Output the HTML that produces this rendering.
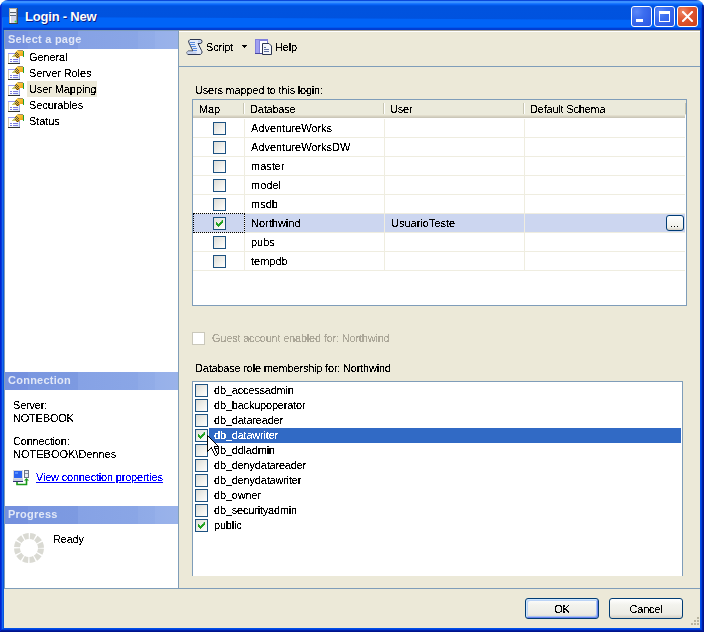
<!DOCTYPE html><html><head><meta charset="utf-8"><style>
*{margin:0;padding:0;box-sizing:border-box}
html,body{width:704px;height:632px;overflow:hidden;background:#fff}
body{position:relative;font-family:"Liberation Sans",sans-serif;font-size:11px;color:#000;line-height:13px}
.a{position:absolute}
.t{position:absolute;white-space:nowrap;letter-spacing:-0.2px;transform:scaleY(1.06);transform-origin:0 10.3px;filter:url(#crisp)}
#win{left:0;top:0;width:704px;height:632px;border-radius:8px 8px 0 0;overflow:hidden;background:#ECE9D8}
#title{left:0;top:0;width:704px;height:30px;background:linear-gradient(180deg,#0A48DC 0,#0A48DC 1px,#3A90FF 1px,#3A90FF 3px,#1A78FF 3px,#1A78FF 4px,#0A66F8 4px,#0A66F8 5px,#0058E8 5px,#0058E8 6px,#0053DF 6px,#0052DE 27px,#0058EE 27px,#0058EE 28px,#0040D8 28px,#003CD0 30px)}
#tband{left:0;top:16px;width:704px;height:11px;background:#0064F8;clip-path:polygon(0 1px,704px 4px,704px 11px,0 11px)}
.fl{top:0;height:632px;width:1px}
.fb{left:0;width:704px;height:1px}
.ttl{transform:none;filter:none;left:25px;top:7px;font-weight:bold;font-size:13px;color:#fff;text-shadow:1px 1px 0 #0A1883;line-height:20px;letter-spacing:-0.2px}
.cb{top:6px;width:21px;height:21px;border:1px solid #fff;border-radius:3px}
.hdr{position:absolute;left:5px;width:173px;height:18px;background:linear-gradient(90deg,#7490DE 0,#7692DF 23px,#7A97E0 23px,#7D9AE1 73px,#86A2E5 73px,#8AA6E6 133px,#8FAAE7 133px,#91ACE8 150px,#96B0EA 150px,#9AB3EA 173px);}
.ht{left:8px;color:#E2E8F7;font-weight:bold;letter-spacing:0.25px;filter:none}
.chk{position:absolute;width:13px;height:13px;border:1px solid #1C5180;background:linear-gradient(135deg,#DCDCD7 0,#F0F0EC 55%,#FFFFFF 100%)}
.chk svg{position:absolute;left:2px;top:2px}
.gl{position:absolute;background:#EFEDE0}
.btn{position:absolute;width:74px;height:21px;border:1px solid #003C74;border-radius:3px;background:linear-gradient(#FFFFFF,#F3F3EE 30%,#ECEBE4 80%,#D6D0C5)}
</style></head><body><svg width="0" height="0" style="position:absolute"><filter id="crisp" x="-5%" y="-20%" width="110%" height="140%"><feComponentTransfer><feFuncA type="discrete" tableValues="0 0 0 0 0 0 0 0 0 0 0 0 0 0 0 0 0 0 0 0 0 1 1 1 1 1 1 1 1 1 1 1 1 1 1 1 1 1 1 1 1 1 1 1 1 1 1 1 1 1"/></feComponentTransfer></filter></svg><div id="win" class="a">
<div id="title" class="a"></div><div id="tband" class="a"></div>
<div class="a fl" style="left:0px;top:5px;height:627px;background:#0024D0"></div>
<div class="a fl" style="left:1px;top:4px;height:628px;background:#0838DC"></div>
<div class="a fl" style="left:2px;top:18px;height:614px;background:#166AEE"></div>
<div class="a fl" style="left:3px;top:30px;height:602px;background:#0855DD"></div>
<div class="a fl" style="left:700px;top:30px;height:602px;background:#0050E8"></div>
<div class="a fl" style="left:701px;top:8px;height:624px;background:#003BDA"></div>
<div class="a fl" style="left:702px;top:5px;height:627px;background:#001EA0"></div>
<div class="a fl" style="left:703px;top:5px;height:627px;background:#00138C"></div>
<div class="a fb" style="top:628px;left:3px;width:698px;background:#0050E8"></div>
<div class="a fb" style="top:629px;left:2px;width:700px;background:#003BDA"></div>
<div class="a fb" style="top:630px;left:1px;width:702px;background:#001EA0"></div>
<div class="a fb" style="top:631px;left:0px;width:704px;background:#00138C"></div>
<svg class="a" style="left:9px;top:8px" width="9" height="16" viewBox="0 0 9 16" shape-rendering="crispEdges">
<rect x="0" y="0" width="9" height="16" fill="#B4AC98"/>
<rect x="8" y="0" width="1" height="16" fill="#4A4A52"/>
<rect x="0" y="15" width="9" height="1" fill="#3E3E46"/>
<rect x="1" y="1" width="7" height="3" fill="#F2F5FA"/>
<rect x="1" y="4" width="7" height="1" fill="#58606E"/>
<rect x="1" y="5" width="7" height="1" fill="#E6EAF2"/>
<rect x="1" y="6" width="7" height="1" fill="#EEF0F6"/>
<rect x="1" y="7" width="7" height="1" fill="#5A6878"/>
<rect x="1" y="8" width="7" height="7" fill="#D2D6EC"/>
<rect x="1" y="8" width="1" height="7" fill="#FFFFFF"/>
<rect x="7" y="1" width="1" height="14" fill="#8C92A0"/>
<circle cx="6.5" cy="13.5" r="1" fill="#38E038" shape-rendering="auto"/>
</svg>
<div class="t ttl">Login - New</div>
<div class="a cb" style="left:631px;background:radial-gradient(circle at 25% 25%,#5C88F8 0,#3C6EF0 35%,#2855E2 100%)"><div class="a" style="left:4px;top:12px;width:7px;height:3px;background:#fff"></div></div>
<div class="a cb" style="left:654px;background:radial-gradient(circle at 25% 25%,#5C88F8 0,#3C6EF0 35%,#2855E2 100%)"><div class="a" style="left:4px;top:4px;width:11px;height:11px;border:1px solid #fff;border-top-width:3px"></div></div>
<div class="a cb" style="left:677px;background:radial-gradient(circle at 25% 25%,#EE8A68 0,#E25A34 35%,#CC4018 100%)"><svg class="a" style="left:4px;top:4px" width="11" height="11" viewBox="0 0 11 11"><path d="M1 1L10 10M10 1L1 10" stroke="#fff" stroke-width="2" stroke-linecap="square"/></svg></div>
<div class="a" style="left:4px;top:30px;width:175px;height:559px;background:#fff;border:1px solid #7F9DB9"></div>
<div class="hdr" style="top:31px"></div><div class="t ht" style="top:33px">Select a page</div>
<div class="a" style="left:27px;top:81px;width:70px;height:16px;background:#ECE9D8"></div>
<div class="a" style="left:8px;top:49px"><svg width="17" height="16" viewBox="0 0 17 16" shape-rendering="crispEdges">
<defs><linearGradient id="hg" x1="0" y1="0" x2="1" y2="1"><stop offset="0" stop-color="#FFE890"/><stop offset="0.5" stop-color="#F8C030"/><stop offset="1" stop-color="#E89010"/></linearGradient>
<linearGradient id="pg" x1="0" y1="0" x2="1" y2="1"><stop offset="0.5" stop-color="#FFFFFF"/><stop offset="1" stop-color="#C8DCF8"/></linearGradient></defs>
<rect x="0" y="4" width="12" height="11" fill="url(#pg)"/>
<rect x="0" y="4" width="1" height="11" fill="#D0C8B0"/>
<rect x="0" y="4" width="12" height="1" fill="#9898F0"/>
<rect x="11" y="5" width="1" height="10" fill="#A0A8E8"/>
<rect x="0" y="14" width="12" height="1" fill="#303030"/>
<rect x="2" y="10" width="2" height="1" fill="#7C7CE0"/><rect x="5" y="10" width="5" height="1" fill="#7C7CE0"/>
<rect x="2" y="12" width="2" height="1" fill="#7C7CE0"/><rect x="5" y="12" width="5" height="1" fill="#7C7CE0"/>
<path d="M4 8 L5 6 L7 4 L8 2 L9 1 L15 1 L15 7 L12 7 L11 8 L10 9 L9 9 L7 8 Z" fill="url(#hg)"/>
<path d="M4 8 L5 6 L7 4 L7 8 Z" fill="#C8C870"/>
<rect x="8" y="3" width="1" height="1" fill="#505040"/><rect x="7" y="4" width="1" height="1" fill="#505040"/><rect x="9" y="4" width="1" height="1" fill="#505040"/>
<rect x="8" y="5" width="1" height="1" fill="#505040"/><rect x="10" y="5" width="1" height="1" fill="#505040"/><rect x="7" y="6" width="1" height="1" fill="#505040"/>
<rect x="9" y="6" width="1" height="1" fill="#505040"/><rect x="8" y="7" width="1" height="1" fill="#505040"/><rect x="10" y="7" width="1" height="1" fill="#505040"/>
<rect x="9" y="8" width="1" height="1" fill="#303020"/>
<rect x="10" y="1" width="5" height="1" fill="#A09070"/>
<rect x="15" y="2" width="1" height="6" fill="#20A030"/>
</svg></div>
<div class="t" style="left:29px;top:51px;letter-spacing:-0.1px">General</div>
<div class="a" style="left:8px;top:65px"><svg width="17" height="16" viewBox="0 0 17 16" shape-rendering="crispEdges">
<defs><linearGradient id="hg" x1="0" y1="0" x2="1" y2="1"><stop offset="0" stop-color="#FFE890"/><stop offset="0.5" stop-color="#F8C030"/><stop offset="1" stop-color="#E89010"/></linearGradient>
<linearGradient id="pg" x1="0" y1="0" x2="1" y2="1"><stop offset="0.5" stop-color="#FFFFFF"/><stop offset="1" stop-color="#C8DCF8"/></linearGradient></defs>
<rect x="0" y="4" width="12" height="11" fill="url(#pg)"/>
<rect x="0" y="4" width="1" height="11" fill="#D0C8B0"/>
<rect x="0" y="4" width="12" height="1" fill="#9898F0"/>
<rect x="11" y="5" width="1" height="10" fill="#A0A8E8"/>
<rect x="0" y="14" width="12" height="1" fill="#303030"/>
<rect x="2" y="10" width="2" height="1" fill="#7C7CE0"/><rect x="5" y="10" width="5" height="1" fill="#7C7CE0"/>
<rect x="2" y="12" width="2" height="1" fill="#7C7CE0"/><rect x="5" y="12" width="5" height="1" fill="#7C7CE0"/>
<path d="M4 8 L5 6 L7 4 L8 2 L9 1 L15 1 L15 7 L12 7 L11 8 L10 9 L9 9 L7 8 Z" fill="url(#hg)"/>
<path d="M4 8 L5 6 L7 4 L7 8 Z" fill="#C8C870"/>
<rect x="8" y="3" width="1" height="1" fill="#505040"/><rect x="7" y="4" width="1" height="1" fill="#505040"/><rect x="9" y="4" width="1" height="1" fill="#505040"/>
<rect x="8" y="5" width="1" height="1" fill="#505040"/><rect x="10" y="5" width="1" height="1" fill="#505040"/><rect x="7" y="6" width="1" height="1" fill="#505040"/>
<rect x="9" y="6" width="1" height="1" fill="#505040"/><rect x="8" y="7" width="1" height="1" fill="#505040"/><rect x="10" y="7" width="1" height="1" fill="#505040"/>
<rect x="9" y="8" width="1" height="1" fill="#303020"/>
<rect x="10" y="1" width="5" height="1" fill="#A09070"/>
<rect x="15" y="2" width="1" height="6" fill="#20A030"/>
</svg></div>
<div class="t" style="left:29px;top:67px;letter-spacing:-0.1px">Server Roles</div>
<div class="a" style="left:8px;top:81px"><svg width="17" height="16" viewBox="0 0 17 16" shape-rendering="crispEdges">
<defs><linearGradient id="hg" x1="0" y1="0" x2="1" y2="1"><stop offset="0" stop-color="#FFE890"/><stop offset="0.5" stop-color="#F8C030"/><stop offset="1" stop-color="#E89010"/></linearGradient>
<linearGradient id="pg" x1="0" y1="0" x2="1" y2="1"><stop offset="0.5" stop-color="#FFFFFF"/><stop offset="1" stop-color="#C8DCF8"/></linearGradient></defs>
<rect x="0" y="4" width="12" height="11" fill="url(#pg)"/>
<rect x="0" y="4" width="1" height="11" fill="#D0C8B0"/>
<rect x="0" y="4" width="12" height="1" fill="#9898F0"/>
<rect x="11" y="5" width="1" height="10" fill="#A0A8E8"/>
<rect x="0" y="14" width="12" height="1" fill="#303030"/>
<rect x="2" y="10" width="2" height="1" fill="#7C7CE0"/><rect x="5" y="10" width="5" height="1" fill="#7C7CE0"/>
<rect x="2" y="12" width="2" height="1" fill="#7C7CE0"/><rect x="5" y="12" width="5" height="1" fill="#7C7CE0"/>
<path d="M4 8 L5 6 L7 4 L8 2 L9 1 L15 1 L15 7 L12 7 L11 8 L10 9 L9 9 L7 8 Z" fill="url(#hg)"/>
<path d="M4 8 L5 6 L7 4 L7 8 Z" fill="#C8C870"/>
<rect x="8" y="3" width="1" height="1" fill="#505040"/><rect x="7" y="4" width="1" height="1" fill="#505040"/><rect x="9" y="4" width="1" height="1" fill="#505040"/>
<rect x="8" y="5" width="1" height="1" fill="#505040"/><rect x="10" y="5" width="1" height="1" fill="#505040"/><rect x="7" y="6" width="1" height="1" fill="#505040"/>
<rect x="9" y="6" width="1" height="1" fill="#505040"/><rect x="8" y="7" width="1" height="1" fill="#505040"/><rect x="10" y="7" width="1" height="1" fill="#505040"/>
<rect x="9" y="8" width="1" height="1" fill="#303020"/>
<rect x="10" y="1" width="5" height="1" fill="#A09070"/>
<rect x="15" y="2" width="1" height="6" fill="#20A030"/>
</svg></div>
<div class="t" style="left:29px;top:83px;letter-spacing:-0.1px">User Mapping</div>
<div class="a" style="left:8px;top:97px"><svg width="17" height="16" viewBox="0 0 17 16" shape-rendering="crispEdges">
<defs><linearGradient id="hg" x1="0" y1="0" x2="1" y2="1"><stop offset="0" stop-color="#FFE890"/><stop offset="0.5" stop-color="#F8C030"/><stop offset="1" stop-color="#E89010"/></linearGradient>
<linearGradient id="pg" x1="0" y1="0" x2="1" y2="1"><stop offset="0.5" stop-color="#FFFFFF"/><stop offset="1" stop-color="#C8DCF8"/></linearGradient></defs>
<rect x="0" y="4" width="12" height="11" fill="url(#pg)"/>
<rect x="0" y="4" width="1" height="11" fill="#D0C8B0"/>
<rect x="0" y="4" width="12" height="1" fill="#9898F0"/>
<rect x="11" y="5" width="1" height="10" fill="#A0A8E8"/>
<rect x="0" y="14" width="12" height="1" fill="#303030"/>
<rect x="2" y="10" width="2" height="1" fill="#7C7CE0"/><rect x="5" y="10" width="5" height="1" fill="#7C7CE0"/>
<rect x="2" y="12" width="2" height="1" fill="#7C7CE0"/><rect x="5" y="12" width="5" height="1" fill="#7C7CE0"/>
<path d="M4 8 L5 6 L7 4 L8 2 L9 1 L15 1 L15 7 L12 7 L11 8 L10 9 L9 9 L7 8 Z" fill="url(#hg)"/>
<path d="M4 8 L5 6 L7 4 L7 8 Z" fill="#C8C870"/>
<rect x="8" y="3" width="1" height="1" fill="#505040"/><rect x="7" y="4" width="1" height="1" fill="#505040"/><rect x="9" y="4" width="1" height="1" fill="#505040"/>
<rect x="8" y="5" width="1" height="1" fill="#505040"/><rect x="10" y="5" width="1" height="1" fill="#505040"/><rect x="7" y="6" width="1" height="1" fill="#505040"/>
<rect x="9" y="6" width="1" height="1" fill="#505040"/><rect x="8" y="7" width="1" height="1" fill="#505040"/><rect x="10" y="7" width="1" height="1" fill="#505040"/>
<rect x="9" y="8" width="1" height="1" fill="#303020"/>
<rect x="10" y="1" width="5" height="1" fill="#A09070"/>
<rect x="15" y="2" width="1" height="6" fill="#20A030"/>
</svg></div>
<div class="t" style="left:29px;top:99px;letter-spacing:-0.1px">Securables</div>
<div class="a" style="left:8px;top:113px"><svg width="17" height="16" viewBox="0 0 17 16" shape-rendering="crispEdges">
<defs><linearGradient id="hg" x1="0" y1="0" x2="1" y2="1"><stop offset="0" stop-color="#FFE890"/><stop offset="0.5" stop-color="#F8C030"/><stop offset="1" stop-color="#E89010"/></linearGradient>
<linearGradient id="pg" x1="0" y1="0" x2="1" y2="1"><stop offset="0.5" stop-color="#FFFFFF"/><stop offset="1" stop-color="#C8DCF8"/></linearGradient></defs>
<rect x="0" y="4" width="12" height="11" fill="url(#pg)"/>
<rect x="0" y="4" width="1" height="11" fill="#D0C8B0"/>
<rect x="0" y="4" width="12" height="1" fill="#9898F0"/>
<rect x="11" y="5" width="1" height="10" fill="#A0A8E8"/>
<rect x="0" y="14" width="12" height="1" fill="#303030"/>
<rect x="2" y="10" width="2" height="1" fill="#7C7CE0"/><rect x="5" y="10" width="5" height="1" fill="#7C7CE0"/>
<rect x="2" y="12" width="2" height="1" fill="#7C7CE0"/><rect x="5" y="12" width="5" height="1" fill="#7C7CE0"/>
<path d="M4 8 L5 6 L7 4 L8 2 L9 1 L15 1 L15 7 L12 7 L11 8 L10 9 L9 9 L7 8 Z" fill="url(#hg)"/>
<path d="M4 8 L5 6 L7 4 L7 8 Z" fill="#C8C870"/>
<rect x="8" y="3" width="1" height="1" fill="#505040"/><rect x="7" y="4" width="1" height="1" fill="#505040"/><rect x="9" y="4" width="1" height="1" fill="#505040"/>
<rect x="8" y="5" width="1" height="1" fill="#505040"/><rect x="10" y="5" width="1" height="1" fill="#505040"/><rect x="7" y="6" width="1" height="1" fill="#505040"/>
<rect x="9" y="6" width="1" height="1" fill="#505040"/><rect x="8" y="7" width="1" height="1" fill="#505040"/><rect x="10" y="7" width="1" height="1" fill="#505040"/>
<rect x="9" y="8" width="1" height="1" fill="#303020"/>
<rect x="10" y="1" width="5" height="1" fill="#A09070"/>
<rect x="15" y="2" width="1" height="6" fill="#20A030"/>
</svg></div>
<div class="t" style="left:29px;top:115px;letter-spacing:-0.1px">Status</div>
<div class="hdr" style="top:372px"></div><div class="t ht" style="top:374px">Connection</div>
<div class="t" style="left:13px;top:399px">Server:</div>
<div class="t" style="left:13px;top:412px">NOTEBOOK</div>
<div class="t" style="left:13px;top:435px">Connection:</div>
<div class="t" style="left:13px;top:448px;letter-spacing:0">NOTEBOOK\Dennes</div>
<svg class="a" style="left:13px;top:470px" width="17" height="16" viewBox="0 0 17 16">
<rect x="0" y="0" width="10" height="9" fill="#D8D8E0"/>
<rect x="1" y="1" width="8" height="7" fill="#2A62F0"/><rect x="2" y="2" width="3" height="2" fill="#5A90FF"/>
<rect x="0" y="9" width="10" height="3" fill="#C8CCE0"/>
<rect x="0" y="11" width="10" height="1" fill="#303070"/>
<rect x="11.5" y="0.5" width="4" height="7" fill="#E8ECF4" stroke="#6C7488" stroke-width="1"/>
<rect x="12" y="3" width="3" height="1" fill="#8890A0"/>
<path d="M4 12 V14.5 H13.5 V9" fill="none" stroke="#1A9A1A" stroke-width="1.6"/>
<path d="M11 10.5 L13.5 8 L16 10.5 Z" fill="#1A9A1A"/>
</svg>
<div class="t" style="left:36px;top:471px;color:#0000FF;text-decoration:underline">View connection properties</div>
<div class="hdr" style="top:506px"></div><div class="t ht" style="top:508px">Progress</div>
<svg class="a" style="left:13px;top:532px" width="32" height="32" viewBox="-16 -16 32 32"><circle cx="0" cy="0" r="12" fill="none" stroke="#DADAD3" stroke-width="6" stroke-dasharray="5 1.283" stroke-dashoffset="5.64"/></svg>
<div class="t" style="left:53px;top:533px">Ready</div>
<div class="a" style="left:179px;top:30px;width:521px;height:1px;background:#ACA899"></div>
<div class="a" style="left:179px;top:31px;width:521px;height:1px;background:#fff"></div>
<div class="a" style="left:179px;top:66px;width:521px;height:1px;background:#7F9DB9"></div>
<div class="a" style="left:178px;top:588px;width:522px;height:1px;background:#7F9DB9"></div>
<svg class="a" style="left:184px;top:36px" width="22" height="22" viewBox="0 0 22 22">
<path d="M6 3.5 H16 A2 2 0 0 1 16 7.5 H14 L17.5 14.5 A2.5 2.5 0 0 1 15 18.5 H4 A2 2 0 0 1 4 15 H9 L5 7 A2.5 2.5 0 0 1 6 3.5 Z" fill="#E6ECF8" stroke="#2B3550" stroke-width="1"/>
<path d="M3 15.5 H12.5 V18 H3.5 Z" fill="#C8D4F0"/>
<path d="M14 4.5 H16.5 V6.5 H14 Z" fill="#B8C8F0"/>
<rect x="6" y="6" width="5" height="1" fill="#5B8CE0"/>
<rect x="6" y="8" width="5" height="1" fill="#5B8CE0"/>
<rect x="7" y="10" width="5" height="1" fill="#5B8CE0"/>
<rect x="9" y="12" width="4" height="1" fill="#5B8CE0"/>
<rect x="9" y="14" width="4" height="1" fill="#5B8CE0"/>
</svg>
<div class="t" style="left:206px;top:41px">Script</div>
<svg class="a" style="left:242px;top:45px" width="6" height="3" viewBox="0 0 6 3"><path d="M0 0H5V1H4V2H3V3H2V2H1V1H0Z" fill="#000"/></svg>
<svg class="a" style="left:252px;top:36px" width="22" height="22" viewBox="0 0 22 22">
<rect x="3" y="3" width="13" height="15" fill="#8080DC"/>
<rect x="4" y="4" width="3" height="13" fill="#A0A0F0"/>
<rect x="3" y="17" width="13" height="1" fill="#4848A0"/>
<rect x="8" y="5" width="7" height="12" fill="#FFFFFF"/>
<path d="M10.5 7.5 H17 L19.5 10 V18.5 H10.5 Z" fill="#F4F6FA" stroke="#2A3550" stroke-width="1"/>
<rect x="12" y="11" width="2" height="1" fill="#6070A0"/>
<rect x="12" y="13" width="5" height="1" fill="#6070A0"/>
<rect x="12" y="15" width="5" height="1" fill="#6070A0"/>
</svg>
<div class="t" style="left:275px;top:41px">Help</div>
<div class="t" style="left:195px;top:84px">Users mapped to this login:</div>
<div class="a" style="left:192px;top:99px;width:495px;height:207px;background:#fff;border:1px solid #7F9DB9"></div>
<div class="a" style="left:193px;top:100px;width:493px;height:15px;background:#EBEADB"></div>
<div class="a" style="left:193px;top:115px;width:492px;height:1px;background:#E2DECD"></div><div class="a" style="left:193px;top:116px;width:492px;height:1px;background:#D6D2C2"></div><div class="a" style="left:193px;top:117px;width:492px;height:1px;background:#CBC7B8"></div>
<div class="a" style="left:685px;top:103px;width:1px;height:11px;background:#C7C5B2"></div>
<div class="a" style="left:243px;top:103px;width:1px;height:11px;background:#C7C5B2"></div>
<div class="a" style="left:244px;top:103px;width:1px;height:11px;background:#fff"></div>
<div class="a" style="left:383px;top:103px;width:1px;height:11px;background:#C7C5B2"></div>
<div class="a" style="left:384px;top:103px;width:1px;height:11px;background:#fff"></div>
<div class="a" style="left:523px;top:103px;width:1px;height:11px;background:#C7C5B2"></div>
<div class="a" style="left:524px;top:103px;width:1px;height:11px;background:#fff"></div>
<div class="t" style="left:199px;top:103px">Map</div>
<div class="t" style="left:250px;top:103px">Database</div>
<div class="t" style="left:390px;top:103px">User</div>
<div class="t" style="left:530px;top:103px">Default Schema</div>
<div class="gl" style="left:193px;top:137px;width:492px;height:1px"></div>
<div class="gl" style="left:244px;top:119px;width:1px;height:18px"></div>
<div class="gl" style="left:384px;top:119px;width:1px;height:18px"></div>
<div class="gl" style="left:524px;top:119px;width:1px;height:18px"></div>
<div class="chk" style="left:213px;top:122px"></div>
<div class="t" style="left:251px;top:122px;letter-spacing:0">AdventureWorks</div>
<div class="gl" style="left:193px;top:156px;width:492px;height:1px"></div>
<div class="gl" style="left:244px;top:138px;width:1px;height:18px"></div>
<div class="gl" style="left:384px;top:138px;width:1px;height:18px"></div>
<div class="gl" style="left:524px;top:138px;width:1px;height:18px"></div>
<div class="chk" style="left:213px;top:141px"></div>
<div class="t" style="left:251px;top:141px;letter-spacing:0">AdventureWorksDW</div>
<div class="gl" style="left:193px;top:175px;width:492px;height:1px"></div>
<div class="gl" style="left:244px;top:157px;width:1px;height:18px"></div>
<div class="gl" style="left:384px;top:157px;width:1px;height:18px"></div>
<div class="gl" style="left:524px;top:157px;width:1px;height:18px"></div>
<div class="chk" style="left:213px;top:160px"></div>
<div class="t" style="left:251px;top:160px;letter-spacing:0">master</div>
<div class="gl" style="left:193px;top:194px;width:492px;height:1px"></div>
<div class="gl" style="left:244px;top:176px;width:1px;height:18px"></div>
<div class="gl" style="left:384px;top:176px;width:1px;height:18px"></div>
<div class="gl" style="left:524px;top:176px;width:1px;height:18px"></div>
<div class="chk" style="left:213px;top:179px"></div>
<div class="t" style="left:251px;top:179px;letter-spacing:0">model</div>
<div class="gl" style="left:193px;top:213px;width:492px;height:1px"></div>
<div class="gl" style="left:244px;top:195px;width:1px;height:18px"></div>
<div class="gl" style="left:384px;top:195px;width:1px;height:18px"></div>
<div class="gl" style="left:524px;top:195px;width:1px;height:18px"></div>
<div class="chk" style="left:213px;top:198px"></div>
<div class="t" style="left:251px;top:198px;letter-spacing:0">msdb</div>
<div class="a" style="left:193px;top:209px;width:493px;height:0px"></div>
<div class="a" style="left:193px;top:214px;width:492px;height:18px;background:#CCD6F0"></div>
<div class="gl" style="left:193px;top:232px;width:492px;height:1px"></div>
<div class="gl" style="left:244px;top:214px;width:1px;height:18px"></div>
<div class="gl" style="left:384px;top:214px;width:1px;height:18px"></div>
<div class="gl" style="left:524px;top:214px;width:1px;height:18px"></div>
<div class="chk" style="left:213px;top:217px"><svg width="7" height="7" viewBox="0 0 7 7"><path d="M6 0h1v3h-1v1h-1v1h-1v1h-1v1h-1v-1h-1v-1h-1v-3h1v1h1v1h1v-1h1v-1h1z" fill="#21A121"/></svg></div>
<div class="t" style="left:251px;top:217px;letter-spacing:0">Northwind</div>
<div class="gl" style="left:193px;top:251px;width:492px;height:1px"></div>
<div class="gl" style="left:244px;top:233px;width:1px;height:18px"></div>
<div class="gl" style="left:384px;top:233px;width:1px;height:18px"></div>
<div class="gl" style="left:524px;top:233px;width:1px;height:18px"></div>
<div class="chk" style="left:213px;top:236px"></div>
<div class="t" style="left:251px;top:236px;letter-spacing:0">pubs</div>
<div class="gl" style="left:193px;top:270px;width:492px;height:1px"></div>
<div class="gl" style="left:244px;top:252px;width:1px;height:18px"></div>
<div class="gl" style="left:384px;top:252px;width:1px;height:18px"></div>
<div class="gl" style="left:524px;top:252px;width:1px;height:18px"></div>
<div class="chk" style="left:213px;top:255px"></div>
<div class="t" style="left:251px;top:255px;letter-spacing:0">tempdb</div>
<div class="a" style="left:193px;top:213px;width:52px;height:20px;border:1px dotted #000"></div>
<div class="t" style="left:391px;top:217px;letter-spacing:0">UsuarioTeste</div>
<div class="btn" style="left:666px;top:215px;width:18px;height:16px;border-radius:3px;background:linear-gradient(#FFFFFF,#F0F0EA 80%,#D6D0C5)"></div>
<div class="a" style="left:671px;top:226px;width:1px;height:1px;background:#000;box-shadow:3px 0 0 #000,6px 0 0 #000"></div>
<div class="a" style="left:192px;top:332px;width:13px;height:13px;border:1px solid #CAC8BB;background:#fff"></div>
<div class="t" style="left:212px;top:332px;color:#ACA899">Guest account enabled for: Northwind</div>
<div class="t" style="left:195px;top:362px">Database role membership for: Northwind</div>
<div class="a" style="left:192px;top:381px;width:491px;height:195px;background:#fff;border:1px solid #7F9DB9;border-bottom:0"></div>
<div class="chk" style="left:195px;top:384px"></div>
<div class="t" style="left:214px;top:384px;color:#000">db_accessadmin</div>
<div class="chk" style="left:195px;top:399px"></div>
<div class="t" style="left:214px;top:399px;color:#000">db_backupoperator</div>
<div class="chk" style="left:195px;top:414px"></div>
<div class="t" style="left:214px;top:414px;color:#000">db_datareader</div>
<div class="a" style="left:209px;top:428px;width:472px;height:15px;background:#316AC5"></div>
<div class="chk" style="left:195px;top:429px"><svg width="7" height="7" viewBox="0 0 7 7"><path d="M6 0h1v3h-1v1h-1v1h-1v1h-1v1h-1v-1h-1v-1h-1v-3h1v1h1v1h1v-1h1v-1h1z" fill="#21A121"/></svg></div>
<div class="t" style="left:214px;top:429px;color:#fff">db_datawriter</div>
<div class="chk" style="left:195px;top:444px"></div>
<div class="t" style="left:214px;top:444px;color:#000">db_ddladmin</div>
<div class="chk" style="left:195px;top:459px"></div>
<div class="t" style="left:214px;top:459px;color:#000">db_denydatareader</div>
<div class="chk" style="left:195px;top:474px"></div>
<div class="t" style="left:214px;top:474px;color:#000">db_denydatawriter</div>
<div class="chk" style="left:195px;top:489px"></div>
<div class="t" style="left:214px;top:489px;color:#000">db_owner</div>
<div class="chk" style="left:195px;top:504px"></div>
<div class="t" style="left:214px;top:504px;color:#000">db_securityadmin</div>
<div class="chk" style="left:195px;top:519px"><svg width="7" height="7" viewBox="0 0 7 7"><path d="M6 0h1v3h-1v1h-1v1h-1v1h-1v1h-1v-1h-1v-1h-1v-3h1v1h1v1h1v-1h1v-1h1z" fill="#21A121"/></svg></div>
<div class="t" style="left:214px;top:519px;color:#000">public</div>
<svg class="a" style="left:207px;top:435px" width="12" height="21" viewBox="0 0 12 21" shape-rendering="crispEdges"><rect x="0" y="0" width="1" height="1" fill="#000"/><rect x="0" y="1" width="1" height="1" fill="#000"/><rect x="1" y="1" width="1" height="1" fill="#000"/><rect x="0" y="2" width="1" height="1" fill="#000"/><rect x="1" y="2" width="1" height="1" fill="#fff"/><rect x="2" y="2" width="1" height="1" fill="#000"/><rect x="0" y="3" width="1" height="1" fill="#000"/><rect x="1" y="3" width="1" height="1" fill="#fff"/><rect x="2" y="3" width="1" height="1" fill="#fff"/><rect x="3" y="3" width="1" height="1" fill="#000"/><rect x="0" y="4" width="1" height="1" fill="#000"/><rect x="1" y="4" width="1" height="1" fill="#fff"/><rect x="2" y="4" width="1" height="1" fill="#fff"/><rect x="3" y="4" width="1" height="1" fill="#fff"/><rect x="4" y="4" width="1" height="1" fill="#000"/><rect x="0" y="5" width="1" height="1" fill="#000"/><rect x="1" y="5" width="1" height="1" fill="#fff"/><rect x="2" y="5" width="1" height="1" fill="#fff"/><rect x="3" y="5" width="1" height="1" fill="#fff"/><rect x="4" y="5" width="1" height="1" fill="#fff"/><rect x="5" y="5" width="1" height="1" fill="#000"/><rect x="0" y="6" width="1" height="1" fill="#000"/><rect x="1" y="6" width="1" height="1" fill="#fff"/><rect x="2" y="6" width="1" height="1" fill="#fff"/><rect x="3" y="6" width="1" height="1" fill="#fff"/><rect x="4" y="6" width="1" height="1" fill="#fff"/><rect x="5" y="6" width="1" height="1" fill="#fff"/><rect x="6" y="6" width="1" height="1" fill="#000"/><rect x="0" y="7" width="1" height="1" fill="#000"/><rect x="1" y="7" width="1" height="1" fill="#fff"/><rect x="2" y="7" width="1" height="1" fill="#fff"/><rect x="3" y="7" width="1" height="1" fill="#fff"/><rect x="4" y="7" width="1" height="1" fill="#fff"/><rect x="5" y="7" width="1" height="1" fill="#fff"/><rect x="6" y="7" width="1" height="1" fill="#fff"/><rect x="7" y="7" width="1" height="1" fill="#000"/><rect x="0" y="8" width="1" height="1" fill="#000"/><rect x="1" y="8" width="1" height="1" fill="#fff"/><rect x="2" y="8" width="1" height="1" fill="#fff"/><rect x="3" y="8" width="1" height="1" fill="#fff"/><rect x="4" y="8" width="1" height="1" fill="#fff"/><rect x="5" y="8" width="1" height="1" fill="#fff"/><rect x="6" y="8" width="1" height="1" fill="#fff"/><rect x="7" y="8" width="1" height="1" fill="#fff"/><rect x="8" y="8" width="1" height="1" fill="#000"/><rect x="0" y="9" width="1" height="1" fill="#000"/><rect x="1" y="9" width="1" height="1" fill="#fff"/><rect x="2" y="9" width="1" height="1" fill="#fff"/><rect x="3" y="9" width="1" height="1" fill="#fff"/><rect x="4" y="9" width="1" height="1" fill="#fff"/><rect x="5" y="9" width="1" height="1" fill="#fff"/><rect x="6" y="9" width="1" height="1" fill="#fff"/><rect x="7" y="9" width="1" height="1" fill="#fff"/><rect x="8" y="9" width="1" height="1" fill="#fff"/><rect x="9" y="9" width="1" height="1" fill="#000"/><rect x="0" y="10" width="1" height="1" fill="#000"/><rect x="1" y="10" width="1" height="1" fill="#fff"/><rect x="2" y="10" width="1" height="1" fill="#fff"/><rect x="3" y="10" width="1" height="1" fill="#fff"/><rect x="4" y="10" width="1" height="1" fill="#fff"/><rect x="5" y="10" width="1" height="1" fill="#fff"/><rect x="6" y="10" width="1" height="1" fill="#fff"/><rect x="7" y="10" width="1" height="1" fill="#fff"/><rect x="8" y="10" width="1" height="1" fill="#fff"/><rect x="9" y="10" width="1" height="1" fill="#fff"/><rect x="10" y="10" width="1" height="1" fill="#000"/><rect x="0" y="11" width="1" height="1" fill="#000"/><rect x="1" y="11" width="1" height="1" fill="#fff"/><rect x="2" y="11" width="1" height="1" fill="#fff"/><rect x="3" y="11" width="1" height="1" fill="#fff"/><rect x="4" y="11" width="1" height="1" fill="#fff"/><rect x="5" y="11" width="1" height="1" fill="#fff"/><rect x="6" y="11" width="1" height="1" fill="#fff"/><rect x="7" y="11" width="1" height="1" fill="#000"/><rect x="8" y="11" width="1" height="1" fill="#000"/><rect x="9" y="11" width="1" height="1" fill="#000"/><rect x="10" y="11" width="1" height="1" fill="#000"/><rect x="11" y="11" width="1" height="1" fill="#000"/><rect x="0" y="12" width="1" height="1" fill="#000"/><rect x="1" y="12" width="1" height="1" fill="#fff"/><rect x="2" y="12" width="1" height="1" fill="#fff"/><rect x="3" y="12" width="1" height="1" fill="#fff"/><rect x="4" y="12" width="1" height="1" fill="#000"/><rect x="5" y="12" width="1" height="1" fill="#fff"/><rect x="6" y="12" width="1" height="1" fill="#fff"/><rect x="7" y="12" width="1" height="1" fill="#000"/><rect x="0" y="13" width="1" height="1" fill="#000"/><rect x="1" y="13" width="1" height="1" fill="#fff"/><rect x="2" y="13" width="1" height="1" fill="#fff"/><rect x="3" y="13" width="1" height="1" fill="#000"/><rect x="4" y="13" width="1" height="1" fill="#000"/><rect x="5" y="13" width="1" height="1" fill="#fff"/><rect x="6" y="13" width="1" height="1" fill="#fff"/><rect x="7" y="13" width="1" height="1" fill="#000"/><rect x="0" y="14" width="1" height="1" fill="#000"/><rect x="1" y="14" width="1" height="1" fill="#fff"/><rect x="2" y="14" width="1" height="1" fill="#000"/><rect x="5" y="14" width="1" height="1" fill="#000"/><rect x="6" y="14" width="1" height="1" fill="#fff"/><rect x="7" y="14" width="1" height="1" fill="#fff"/><rect x="8" y="14" width="1" height="1" fill="#000"/><rect x="0" y="15" width="1" height="1" fill="#000"/><rect x="1" y="15" width="1" height="1" fill="#000"/><rect x="5" y="15" width="1" height="1" fill="#000"/><rect x="6" y="15" width="1" height="1" fill="#fff"/><rect x="7" y="15" width="1" height="1" fill="#fff"/><rect x="8" y="15" width="1" height="1" fill="#000"/><rect x="0" y="16" width="1" height="1" fill="#000"/><rect x="6" y="16" width="1" height="1" fill="#000"/><rect x="7" y="16" width="1" height="1" fill="#fff"/><rect x="8" y="16" width="1" height="1" fill="#fff"/><rect x="9" y="16" width="1" height="1" fill="#000"/><rect x="6" y="17" width="1" height="1" fill="#000"/><rect x="7" y="17" width="1" height="1" fill="#fff"/><rect x="8" y="17" width="1" height="1" fill="#fff"/><rect x="9" y="17" width="1" height="1" fill="#000"/><rect x="7" y="18" width="1" height="1" fill="#000"/><rect x="8" y="18" width="1" height="1" fill="#fff"/><rect x="9" y="18" width="1" height="1" fill="#fff"/><rect x="10" y="18" width="1" height="1" fill="#000"/><rect x="7" y="19" width="1" height="1" fill="#000"/><rect x="8" y="19" width="1" height="1" fill="#fff"/><rect x="9" y="19" width="1" height="1" fill="#fff"/><rect x="10" y="19" width="1" height="1" fill="#000"/><rect x="8" y="20" width="1" height="1" fill="#000"/><rect x="9" y="20" width="1" height="1" fill="#000"/></svg>
<div class="btn" style="left:525px;top:598px;box-shadow:inset 1px 1px 0 #CEE7FF,inset -1px -1px 0 #6982EE,inset 2px 2px 0 #BCD4F6,inset -2px -2px 0 #A8C4F4"></div>
<div class="t" style="left:525px;top:603px;width:74px;text-align:center">OK</div>
<div class="btn" style="left:609px;top:598px"></div>
<div class="t" style="left:609px;top:603px;width:74px;text-align:center">Cancel</div>
<div class="a" style="left:697px;top:617px;width:2px;height:2px;background:#B8B4A0"></div>
<div class="a" style="left:694px;top:620px;width:2px;height:2px;background:#B8B4A0"></div>
<div class="a" style="left:697px;top:620px;width:2px;height:2px;background:#B8B4A0"></div>
<div class="a" style="left:691px;top:623px;width:2px;height:2px;background:#B8B4A0"></div>
<div class="a" style="left:694px;top:623px;width:2px;height:2px;background:#B8B4A0"></div>
<div class="a" style="left:697px;top:623px;width:2px;height:2px;background:#B8B4A0"></div>
</div></body></html>
